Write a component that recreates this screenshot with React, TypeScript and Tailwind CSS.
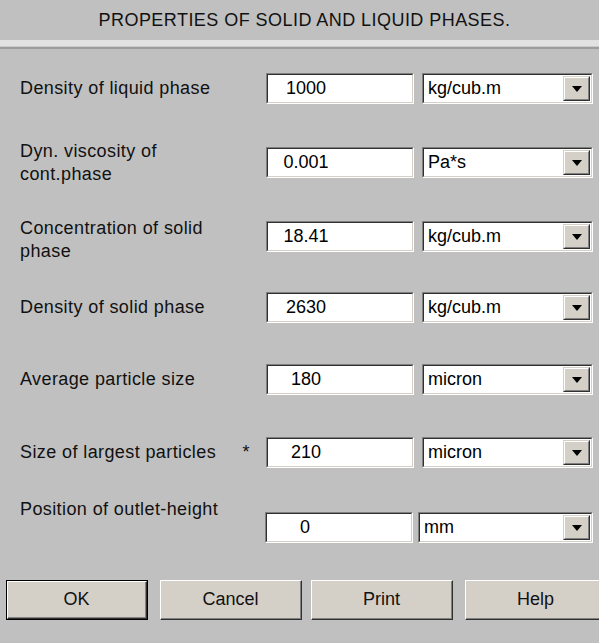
import React from "react";

const font = { fontFamily: '"Liberation Sans", Arial, sans-serif' };

const Sunken = ({ className, children }: { className: string; children: React.ReactNode }) => (
  <div className={`border-t border-l border-[#808080] border-b border-r border-b-white border-r-white ${className}`}>
    <div className="h-full w-full border-t border-l border-[#303030] border-b border-r border-b-[#d4d0c8] border-r-[#d4d0c8] bg-white flex items-center">
      {children}
    </div>
  </div>
);

const ValueBox = ({ value, className = "w-[148px]" }: { value: string; className?: string }) => (
  <Sunken className={`h-[31px] ${className}`}>
    <span className="w-[76px] text-center text-[18px] text-black">{value}</span>
  </Sunken>
);

const UnitSelect = ({ unit, className = "w-[171px]" }: { unit: string; className?: string }) => (
  <Sunken className={`h-[31px] ${className}`}>
    <span className="flex-1 pl-[4px] text-[18px] text-black">{unit}</span>
    <div className="mr-px h-[25px] w-[27px] border-t border-l border-[#d4d0c8] border-b border-r border-b-[#303030] border-r-[#303030]">
      <div className="flex h-full w-full items-center justify-center border-t border-l border-white border-b border-r border-b-[#808080] border-r-[#808080] bg-[#d4d0c8]">
        <div className="h-0 w-0 border-l-[5px] border-r-[5px] border-t-[6px] border-l-transparent border-r-transparent border-t-black" />
      </div>
    </div>
  </Sunken>
);

const Row = ({ label, value, unit, mt, star }: { label: React.ReactNode; value: string; unit: string; mt: string; star?: boolean }) => (
  <div className={`flex h-[31px] items-center ${mt}`}>
    <div className="flex w-[266px] items-center pl-[20px] pr-[10px] text-[18px] leading-[23px] tracking-[0.4px] text-[#111]">
      <div className="flex-1">{label}</div>
      {star && <span className="mr-[6px]">*</span>}
    </div>
    <ValueBox value={value} />
    <div className="w-[8px]" />
    <UnitSelect unit={unit} />
  </div>
);

const Button = ({ text, isDefault }: { text: string; isDefault?: boolean }) => (
  <div className={`h-[40px] w-[142px] shrink-0 ${isDefault ? "border border-black" : ""}`}>
    <div className="h-full w-full border-t border-l border-white border-b border-r border-b-[#303030] border-r-[#303030]">
      <div className="flex h-full w-full items-center justify-center border-b border-r border-b-[#808080] border-r-[#808080] bg-[#d4d0c8] text-[18px] text-[#111]">
        {text}
      </div>
    </div>
  </div>
);

const App = () => {
  return (
    <div className="flex h-[643px] w-[599px] flex-col overflow-hidden bg-[#c0c0c0]" style={font}>
      {/* Title */}
      <div className="flex h-[40px] items-center justify-center pl-[10px] text-[18px] tracking-[0.45px] text-[#111]">
        PROPERTIES OF SOLID AND LIQUID PHASES.
      </div>
      <div className="h-[6px] bg-[#e2e2e2]" />
      <div className="h-px bg-[#cacaca]" />
      <div className="h-[2px] bg-[#9c9c9c]" />

      <Row mt="mt-[24px]" label="Density of liquid phase" value="1000" unit="kg/cub.m" />
      <Row mt="mt-[43px]" label={<>Dyn. viscosity of<br />cont.phase</>} value="0.001" unit="Pa*s" />
      <Row mt="mt-[43px]" label={<div className="pt-[6px]">Concentration of solid<br />phase</div>} value="18.41" unit="kg/cub.m" />
      <Row mt="mt-[40px]" label="Density of solid phase" value="2630" unit="kg/cub.m" />
      <Row mt="mt-[41px]" label="Average particle size" value="180" unit="micron" />
      <Row mt="mt-[42px]" label="Size of largest particles" value="210" unit="micron" star />

      {/* Last row: label sits above the fields */}
      <div className="mt-[30px] flex">
        <div className="w-[265px] pl-[20px] text-[18px] leading-[23px] tracking-[0.4px] text-[#111]">
          Position of outlet-height
        </div>
        <div className="mt-[14px] flex">
          <ValueBox value="0" />
          <div className="w-[5px]" />
          <UnitSelect unit="mm" className="w-[175px]" />
        </div>
      </div>

      {/* Buttons */}
      <div className="mt-[37px] flex pl-[6px]">
        <Button text="OK" isDefault />
        <div className="w-[12px] shrink-0" />
        <Button text="Cancel" />
        <div className="w-[9px] shrink-0" />
        <Button text="Print" />
        <div className="w-[12px] shrink-0" />
        <Button text="Help" />
      </div>
    </div>
  );
};

export default App;
